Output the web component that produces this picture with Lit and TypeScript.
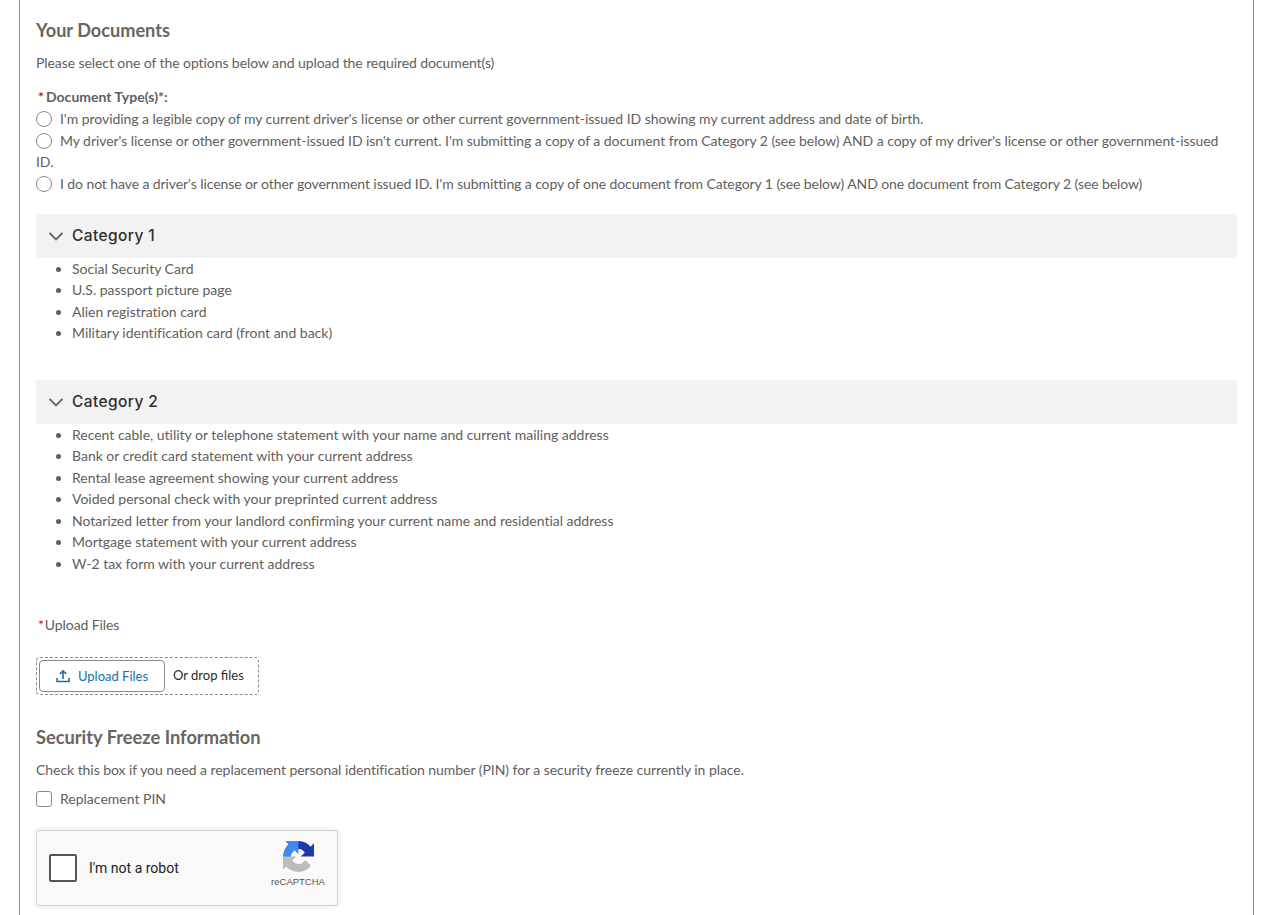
import { LitElement, html, css } from "lit";
import { customElement } from "lit/decorators.js";

const cat1 = ["Social Security Card", "U.S. passport picture page", "Alien registration card", "Military identification card (front and back)"];
const cat2 = [
  "Recent cable, utility or telephone statement with your name and current mailing address",
  "Bank or credit card statement with your current address",
  "Rental lease agreement showing your current address",
  "Voided personal check with your preprinted current address",
  "Notarized letter from your landlord confirming your current name and residential address",
  "Mortgage statement with your current address",
  "W-2 tax form with your current address",
];
const radios = [
  "I'm providing a legible copy of my current driver's license or other current government-issued ID showing my current address and date of birth.",
  "My driver's license or other government-issued ID isn't current. I'm submitting a copy of a document from Category 2 (see below) AND a copy of my driver's license or other government-issued ID.",
  "I do not have a driver's license or other government issued ID. I'm submitting a copy of one document from Category 1 (see below) AND one document from Category 2 (see below)",
];

@customElement("app-root")
export class AppRoot extends LitElement {
  static styles = css`
    :host { display: block; font-family: Lato, "Liberation Sans", sans-serif; font-size: 14px; line-height: 21.5px; color: #625e5c; }
    .page { margin: 0 19px; height: 915px; box-sizing: border-box; border-left: 1px solid #8f8f8f; border-right: 1px solid #8f8f8f; padding: 19px 16px 0; overflow: hidden; }
    h2 { margin: 0; font-size: 18.15px; font-weight: 700; line-height: 22px; color: #6a6461; }
    .sec-h { margin-top: 31px; font-size: 18.25px; }
    .intro { margin: 11px 0 0; letter-spacing: -0.08px; }
    .label { margin-top: 12px; font-weight: 700; letter-spacing: 0.02px; }
    .req { color: #e4002b; padding: 0 2px; }
    .radios { margin-top: 1.3px; }
    .radio { display: block; letter-spacing: -0.06px; }
    .radio.r0 { letter-spacing: -0.045px; }
    .radio.r2 { letter-spacing: -0.09px; }
    .circle { display: inline-block; box-sizing: border-box; width: 16px; height: 16px; border: 1px solid #8a8a8a; border-radius: 50%; background: #fff; vertical-align: -3px; margin-right: 8px; }
    .section { margin-top: 19.3px; height: 44px; background: #f2f2f2; display: flex; align-items: center; padding-left: 13px; gap: 9px; }
    .section svg { display: block; }
    .section span { font-family: Inter, "Noto Sans", sans-serif; font-weight: 500; font-size: 15.5px; letter-spacing: 0.4px; color: #2e2e2e; }
    ul { margin: 0; padding: 0 0 0 36px; letter-spacing: -0.01px; }
    .sec2 { margin-top: 36px; }
    .upload-label { margin-top: 39.9px; letter-spacing: -0.1px; }
    .upload-label .req { padding-right: 1px; }
    .drop { margin-top: 21.5px; width: 223px; height: 38px; box-sizing: border-box; border: 1px dashed #8a8a8a; border-radius: 4px; display: flex; align-items: center; padding-left: 2px; font-size: 13px; }
    .btn { box-sizing: border-box; width: 126px; height: 32px; border: 1px solid #8a8a8a; border-radius: 4px; display: flex; align-items: center; justify-content: center; gap: 8px; color: #1a6fa8; background: #fff; }
    .btn svg { display: block; margin-top: 1px; }
    .btn span { margin-top: 2px; }
    .or { margin-left: 8px; color: #2c2c2c; }
    .check-p { margin: 11px 0 0; letter-spacing: -0.05px; }
    .check { margin-top: 8px; display: flex; align-items: center; }
    .box { box-sizing: border-box; width: 16px; height: 16px; border: 1px solid #8a8a8a; border-radius: 3px; background: #fff; margin-right: 8px; }
    .rc { margin-top: 20px; width: 302px; height: 76px; box-sizing: border-box; border: 1px solid #d6d6d6; border-radius: 3px; background: #f9f9f9; box-shadow: 0 0 4px 1px rgba(0,0,0,.08); display: flex; align-items: center; padding-left: 12px; font-family: Roboto, "Liberation Sans", sans-serif; color: #222; }
    .rc-box { box-sizing: border-box; width: 28px; height: 28px; border: 2px solid #555; border-radius: 2px; background: #fff; margin-right: 12px; }
    .rc-label { position: relative; top: 1px; }
    .rc-logo { margin-left: auto; margin-right: 11px; width: 56px; display: flex; flex-direction: column; align-items: center; margin-top: -6px; }
    .rc-logo svg { display: block; }
    .rc-t { font-family: "Liberation Sans", sans-serif; font-size: 9.5px; line-height: 12px; color: #555; margin-top: 4px; white-space: nowrap; }
  `;

  private chevron() {
    return html`<svg width="14" height="14" viewBox="0 0 14 14" fill="none" stroke="#666" stroke-width="1.8"><path d="M0.6 4l6.400 6.400L13.400 4"/></svg>`;
  }

  render() {
    return html`<div class="page">
      <h2>Your Documents</h2>
      <p class="intro">Please select one of the options below and upload the required document(s)</p>
      <div class="label"><span class="req">*</span>Document Type(s)*:</div>
      <div class="radios">
        ${radios.map((r, i) => html`<label class="radio r${i}"><span class="circle"></span>${r}</label>`)}
      </div>
      <div class="section">${this.chevron()}<span>Category 1</span></div>
      <ul>${cat1.map((i) => html`<li>${i}</li>`)}</ul>
      <div class="section sec2">${this.chevron()}<span>Category 2</span></div>
      <ul>${cat2.map((i) => html`<li>${i}</li>`)}</ul>
      <div class="upload-label"><span class="req">*</span>Upload Files</div>
      <div class="drop">
        <div class="btn">
          <svg width="14" height="14" viewBox="0 0 14 14" fill="none" stroke="#1a6fa8" stroke-width="1.6"><path d="M7 10V2M3.800 5L7 1.800 10.200 5M1 9v3.500h12V9"/></svg>
          <span>Upload Files</span>
        </div>
        <span class="or">Or drop files</span>
      </div>
      <h2 class="sec-h">Security Freeze Information</h2>
      <p class="check-p">Check this box if you need a replacement personal identification number (PIN) for a security freeze currently in place.</p>
      <div class="check"><span class="box"></span>Replacement PIN</div>
      <div class="rc">
        <span class="rc-box"></span>
        <span class="rc-label">I'm not a robot</span>
        <div class="rc-logo">
          <svg width="31" height="31" viewBox="0 0 64 64">
            <path d="M64 31.955l-.033-1.37V4.687l-7.16 7.16C50.948 4.674 42.033.093 32.05.093c-10.4 0-19.622 4.96-25.458 12.64l11.736 11.86a15.55 15.55 0 0 1 4.754-5.334c2.05-1.6 4.952-2.906 8.968-2.906.485 0 .86.057 1.135.163 4.976.393 9.29 3.14 11.83 7.125l-8.307 8.307c10.522-.04 22.4-.066 27.295.005" fill="#1c3aa9"/>
            <path d="M31.862.094l-1.37.033H4.594l7.16 7.16C4.58 13.147 0 22.06 0 32.046c0 10.4 4.96 19.622 12.64 25.458l11.86-11.736a15.55 15.55 0 0 1-5.334-4.754c-1.6-2.05-2.906-4.952-2.906-8.968 0-.485.057-.86.163-1.135.393-4.976 3.14-9.29 7.125-11.83l8.307 8.307c-.04-10.522-.066-22.4.005-27.295" fill="#4285f4"/>
            <path d="M.001 32.045l.033 1.37v25.898l7.16-7.16c5.86 7.173 14.774 11.754 24.76 11.754 10.4 0 19.622-4.96 25.458-12.64l-11.736-11.86a15.55 15.55 0 0 1-4.754 5.334c-2.05 1.6-4.952 2.906-8.968 2.906-.485 0-.86-.057-1.135-.163-4.976-.393-9.29-3.14-11.83-7.125l8.307-8.307c-10.522.04-22.4.066-27.295-.005" fill="#bcbcbc"/>
          </svg>
          <div class="rc-t">reCAPTCHA</div>
        </div>
      </div>
    </div>`;
  }
}
